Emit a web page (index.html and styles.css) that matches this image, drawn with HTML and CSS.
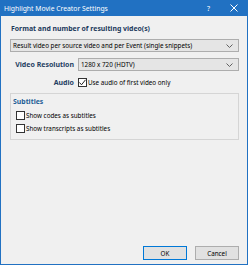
FILE: index.html
```html
<!DOCTYPE html>
<html lang="en">
<head>
    <meta charset="UTF-8">
    <meta name="viewport" content="width=device-width, initial-scale=1.0">
    <title>Highlight Movie Creator Settings</title>
    <link rel="stylesheet" href="styles.css">
</head>
<body>
    <div class="dialog">
        <header class="titlebar">
            <span class="title">Highlight Movie Creator Settings</span>
            <span class="help">?</span>
            <svg class="close" width="8" height="8" viewBox="0 0 8 8">
                <path d="M0.5 0.5 L7.5 7.5 M7.5 0.5 L0.5 7.5" stroke="#fff" stroke-width="1" fill="none"/>
            </svg>
        </header>
        <main class="client">
            <div class="heading">Format and number of resulting video(s)</div>
            <div class="combo">
                <span class="combo-text">Result video per source video and per Event (single snippets)</span>
                <svg class="chevron" width="7" height="4" viewBox="0 0 7 4">
                    <path d="M0.5 0.5 L3.5 3.5 L6.5 0.5" stroke="#606060" stroke-width="1" fill="none"/>
                </svg>
            </div>
            <div class="row">
                <span class="label">Video Resolution</span>
                <div class="combo grow">
                    <span class="combo-text">1280 x 720 (HDTV)</span>
                    <svg class="chevron" width="7" height="4" viewBox="0 0 7 4">
                        <path d="M0.5 0.5 L3.5 3.5 L6.5 0.5" stroke="#606060" stroke-width="1" fill="none"/>
                    </svg>
                </div>
            </div>
            <div class="row check-row">
                <span class="label">Audio</span>
                <span class="check checked">
                    <svg width="7" height="7" viewBox="0 0 7 7">
                        <path d="M0.5 3.5 L2.5 5.8 L6.5 0.8" stroke="#222" stroke-width="1" fill="none"/>
                    </svg>
                </span>
                <span class="check-text">Use audio of first video only</span>
            </div>
            <section class="group">
                <div class="group-title">Subtitles</div>
                <div class="option">
                    <span class="check"></span>
                    <span class="check-text">Show codes as subtitles</span>
                </div>
                <div class="option">
                    <span class="check"></span>
                    <span class="check-text">Show transcripts as subtitles</span>
                </div>
            </section>
            <div class="buttons">
                <button class="btn default">OK</button>
                <button class="btn">Cancel</button>
            </div>
        </main>
    </div>
</body>
</html>
```

FILE: styles.css
```css
body {
    margin: 0;
    font-family: "Noto Sans", "Open Sans", sans-serif;
    font-size: 6.3px;
    color: #000;
}
.dialog {
    width: 248px;
    height: 265px;
    box-sizing: border-box;
    border: 1px solid #2171c2;
    border-top: none;
    background-color: #f0f0f0;
    display: flex;
    flex-direction: column;
}
.titlebar {
    height: 16px;
    background-color: #2171c2;
    color: #fff;
    display: flex;
    align-items: center;
    padding-left: 3px;
    flex-shrink: 0;
}
.title {
    font-size: 6.8px;
    flex: 1;
}
.help {
    font-size: 7px;
    margin-right: 20px;
}
.close {
    margin-right: 9px;
}
.client {
    flex: 1;
    display: flex;
    flex-direction: column;
    padding: 8px 8px 4px 9px;
}
.heading {
    height: 10px;
    line-height: 10px;
    font-size: 6.9px;
    font-weight: bold;
    color: #1c3a5c;
    padding-left: 1px;
}
.combo {
    margin-top: 5px;
    height: 13px;
    box-sizing: border-box;
    border: 1px solid #adadad;
    background-color: #e5e5e5;
    display: flex;
    align-items: center;
    padding: 0 5px 0 2px;
}
.combo-text {
    flex: 1;
    white-space: nowrap;
}
.row {
    display: flex;
    align-items: center;
    margin-top: 6px;
}
.row .combo {
    margin-top: 0;
}
.grow {
    flex: 1;
}
.label {
    width: 64px;
    padding-right: 4px;
    text-align: right;
    font-size: 7px;
    font-weight: bold;
    color: #1f3f63;
    white-space: nowrap;
}
.check-row {
    height: 10px;
}
.check {
    width: 9px;
    height: 9px;
    box-sizing: border-box;
    border: 1px solid #333;
    background-color: #fff;
    display: inline-flex;
    align-items: center;
    justify-content: center;
    margin-right: 1px;
}
.group {
    margin-top: 6px;
    height: 47px;
    box-sizing: border-box;
    border: 1px solid #d5d5d5;
    padding: 3px 2px 0;
}
.group-title {
    font-size: 6.9px;
    font-weight: bold;
    color: #1f5e96;
    height: 10px;
    line-height: 10px;
}
.option {
    display: flex;
    align-items: center;
    height: 10px;
    margin-top: 3px;
    padding-left: 3px;
}
.buttons {
    margin-top: auto;
    display: flex;
    justify-content: flex-end;
    gap: 8px;
}
.btn {
    width: 44px;
    height: 14px;
    box-sizing: border-box;
    border: 1px solid #adadad;
    background-color: #e1e1e1;
    font-family: inherit;
    font-size: 6.3px;
    padding: 0;
    color: #000;
}
.btn.default {
    border-color: #0078d7;
}
```
